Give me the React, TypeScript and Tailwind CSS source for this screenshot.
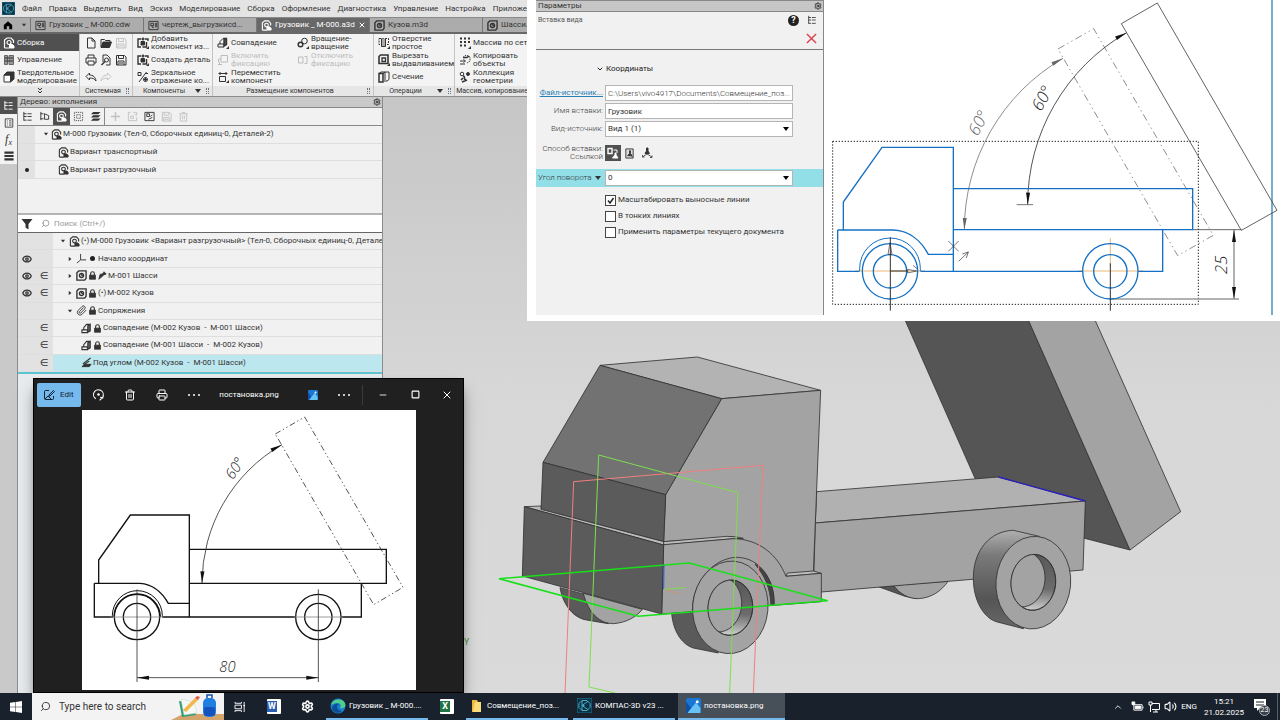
import React from "react";
import {
  Search,
  Settings,
  Trash2,
  Printer,
  Minus,
  Square,
  X,
  ChevronUp,
  ChevronDown,
  Eye,
  Paperclip,
  Volume2,
} from "lucide-react";

const glyphs: Record<string, React.ReactNode> = {
  home: <path d="M1 6 6 1.5 11 6v5H7.5V7.5h-3V11H1z" fill="currentColor" stroke="none" />,
  drawing: (
    <>
      <path d="M1 1.5h10v9H1z" />
      <path d="M3 3.5h3v2.5H3zM8 3.5h1.5v4H8zM4.5 6v2h2" />
    </>
  ),
  assembly: (
    <>
      <path d="M1.500 11V3L4 1h4l2.500 2.500V6M1.500 11h5" strokeWidth="1.200" />
      <circle cx="6" cy="5.500" r="2" strokeWidth="1.200" />
      <path d="M6.500 7.500h3L11 9v2H6.500z" fill="currentColor" />
    </>
  ),
  part: (
    <>
      <path d="M1 3 3 1h8v8l-1.500 2H1z" strokeWidth="1.500" />
      <circle cx="6" cy="6" r="2.200" strokeWidth="1.500" />
      <path d="M6 3.800v2.200h2" />
    </>
  ),
  manage: (
    <>
      <path d="M1.500 1.500h3v9h-3zM6 1.500h4.500v9H6z" fill="#999" stroke="#666" />
      <path d="M2 4h8M2 7h8" />
    </>
  ),
  solid: (
    <>
      <path d="M1 4h6.500v7H1z" fill="#fff" />
      <path d="M1 4l3-3h7L7.500 4zM7.500 4 11 1v7l-3.500 3z" fill="currentColor" />
    </>
  ),
  file: <path d="M2.500 1h4.500l3 3v7H2.500zM7 1v3h3" />,
  folder: (
    <>
      <path d="M1 10V2.500h3.500l1 1H10V5" />
      <path d="M1 10.500 3 5h8.500l-2 5.500z" fill="currentColor" />
    </>
  ),
  save: <path d="M1.500 1.500h8l1.500 1.500v8H1.500zM3.500 1.500v3h5v-3M3 11V7h6v4M4 9h4" />,
  print: <path d="M3 4V1h6v3M3 9H1V4h10v5H9M3 7h6v4H3z" />,
  preview: (
    <>
      <path d="M3 8V1h4l3 3v7H6" />
      <circle cx="6.500" cy="6" r="2" />
      <path d="M5 7.500 1.500 11" strokeWidth="1.500" />
    </>
  ),
  undo: <path d="M4.500 2 1 5.500 4.500 9V7c3 0 5 .5 6.500 3C10.500 6 8 4 4.500 4z" />,
  redo: <path d="M7.500 2 11 5.500 7.500 9V7c-3 0-5 .5-6.500 3C1.500 6 4 4 7.500 4z" />,
  component: (
    <>
      <path d="M4 2H1v8h3M8 2h3v2" strokeWidth="1.400" />
      <path d="M4 4.500h3.500V8H4z" fill="currentColor" />
      <path d="M6 .5v3M4.500 2h3M9.500 5v5H5.500" strokeWidth="1.400" />
      <path d="M12 9v3H9z" fill="currentColor" stroke="none" />
    </>
  ),
  mirror: (
    <>
      <path d="M1 1.500h3v3H1zM9.500 1 2 11M8 2.500h3" />
      <circle cx="8.500" cy="8.500" r="2" />
      <path d="M8.500 6.500v4M6.500 8.500h4" />
    </>
  ),
  mate: (
    <>
      <path d="M1 7.500h6v3H1zM3 7.500V5L6 1.500h3.500" strokeWidth="1.200" />
      <path d="M7.500 3 10 1.500v7L7.500 10z" fill="#777" strokeWidth="1.400" />
    </>
  ),
  mateTool: (
    <>
      <path d="M1 7h6v3H1zM3 7V4.500L6 1.500h3.500" />
      <path d="M7 1.500h2.500v6L7 9z" fill="#555" strokeWidth="1.400" />
      <path d="M12 9v3H9z" fill="currentColor" stroke="none" />
    </>
  ),
  fix: <path d="M4 1.500h6.500V8H4zM1 10.500h4M2.500 8v2.500M4 5H1.500v3" />,
  unfix: <path d="M1.500 3H6v6H1.500zM7.500 2.500H10v7H7.500" />,
  move: (
    <>
      <path d="M2 2.500h8M3.500 1 2 2.500 3.500 4M8.500 1 10 2.500 8.500 4M2.500 5.500h6v5h-6z" />
      <path d="M12 9v3H9z" fill="currentColor" stroke="none" />
    </>
  ),
  rotate: (
    <>
      <circle cx="7.500" cy="4" r="2.800" />
      <circle cx="3.500" cy="7.500" r="2.300" strokeWidth="1.500" />
      <path d="M12 9v3H9z" fill="currentColor" stroke="none" />
    </>
  ),
  hole: (
    <>
      <path d="M1 1.500h9.500v6H1z" strokeDasharray="2 1" />
      <path d="M3.500 1.500V9.500h4v-8" fill="#aaa" />
      <path d="M12 9v3H9z" fill="currentColor" stroke="none" />
    </>
  ),
  cut: (
    <>
      <path d="M1 2.500 2.500 1H10v8.500H1z" strokeWidth="1.600" />
      <path d="M4 4h3.500v3.500H4z" strokeWidth="1.300" />
      <path d="M12 9v3H9z" fill="currentColor" stroke="none" />
    </>
  ),
  section: (
    <>
      <path d="M1 2.500 3 1h8v7.500L9 10H6" />
      <path d="M1 2.500h4V11H1z" strokeWidth="1.500" />
      <path d="M5 2.500 7 1M7 1v8" />
    </>
  ),
  array: (
    <>
      <path d="M1 1.500h2M5 1.500h2M9 1.500h2M1 5h2M5 5h2M9 5h2M1 8.500h2M5 8.500h2" strokeWidth="2" />
      <path d="M12 9v3H9z" fill="currentColor" stroke="none" />
    </>
  ),
  copy: (
    <>
      <path d="M4 3.500 7 1l4 2v4L8 9" strokeDasharray="1.500 1" />
      <path d="M4 3.500h4l2-1.500" strokeWidth="1.400" />
      <path d="M1 7h4M4.500 5.500l2 1.500-2 1.500M1 10h5" />
    </>
  ),
  collection: (
    <>
      <circle cx="3" cy="3" r="1.800" />
      <circle cx="9" cy="3" r="1.500" fill="currentColor" />
      <path d="M4 5c3 0 0 4 3 4M2 9l2-2M3 11l5-2" strokeWidth="1.600" />
    </>
  ),
  tree: <path d="M2 1v9.500M2 3h3M2 6h3M2 10h3M6 3h4.500M6 6h4.500M6 10h4.500" />,
  treeAlt: <path d="M2 1v9M2 3h3M2 8.500h3M6 3l4.500 2v4H6z" />,
  dotted: <path d="M1.500 1.500h9v9h-9zM4 4h4v4H4z" strokeDasharray="1 1" />,
  layers: (
    <path
      d="M3.500 1H11.500L9 3.500H1zM3.500 4.700H11.500L9 7H1zM3.500 8.200H11.500L9 10.700H1z"
      fill="currentColor"
      stroke="none"
    />
  ),
  plus: <path d="M6 1v10M1 6h10" strokeWidth="1.500" />,
  refresh: <path d="M4 1.500H1.500v9h9V7M7 1.500h3.500V5M4 5.500h3V8H4zM8 3l2 2" />,
  grid: (
    <>
      <path d="M1 1.500h10v9H1z" />
      <path d="M3 3h3v3H3zM7 6l2-2M5 9l4-2" />
    </>
  ),
  trash: <path d="M1.500 3h9M4.500 3V1.500h3V3M2.500 3v8h7V3M5 5v4M7 5v4" />,
  funnel: <path d="M.5 1h11L7.500 6v5.500l-3-2V6z" fill="currentColor" stroke="none" />,
  lock: (
    <>
      <path d="M3.500 6V3.500a2.500 2.500 0 0 1 5 0V6" strokeWidth="1.500" />
      <path d="M2 5.500h8V11H2z" fill="currentColor" />
    </>
  ),
  pin: <path d="M11 4 8 1 7 3 4 4.500 3 4 1 11l5-4 1-1.500z" fill="currentColor" />,
  axes: <path d="M5 1v6.500h6M5 7.500 1 11" />,
  angle: (
    <>
      <path d="M1 10.500h8l2-2.500H4z" fill="currentColor" />
      <path d="M2 7.500 10.500 1M3 8.500 9 4.500" strokeWidth="1.300" />
    </>
  ),
  listBox: (
    <>
      <path d="M1.500 1h9v10h-9z" />
      <path d="M3.500 3.500h1M6 3.500h3M3.500 6h1M6 6h3M3.500 8.500h1M6 8.500h3" />
    </>
  ),
  bars: <path d="M.5 2h11M.5 6h11M.5 10h11" strokeWidth="2.600" />,
  link: (
    <>
      <path d="M1 1.500h4v5H1z" strokeWidth="1.400" />
      <path d="M6.500 3H10v3" />
      <path d="M8 6v2L5.500 11h5.500L9 8V6z" fill="currentColor" />
    </>
  ),
  picture: (
    <>
      <path d="M2 1h8v10H2z" fill="#ddd" />
      <path d="M6 3v3L4 8.500h4.500L7 6V3zM8 7l1 3" fill="currentColor" />
    </>
  ),
  place: (
    <>
      <path d="M5.500 1v3L4 6.500h4.500L7 4V1z" fill="currentColor" />
      <path d="M6 7 1.500 10M6 7l5 3M1.500 8v2h2M9 10.500h2V8.500" strokeWidth=".8" />
    </>
  ),
  turn: (
    <>
      <path d="M3.500 10A4.500 4.500 0 1 1 10 8M7.500 8.500l2.500.5.500-2.500M7 11.500l2.500-2.500" />
      <circle cx="6" cy="6" r="1.200" fill="currentColor" stroke="none" />
    </>
  ),
  logo: (
    <>
      <path d="M0 0h12v12H0z" fill="#083142" stroke="#1c6a87" />
      <path
        d="M4 2h4l2.500 2.500v3L8 10H4L1.500 7.500v-3zM4 2v8M4 6l5-3.500M4 6l5 3.500M4 6h2"
        stroke="#4fa8c8"
        strokeWidth=".8"
      />
    </>
  ),
};

function Glyph({ name, className = "size-3" }: { name: string; className?: string }) {
  return (
    <svg viewBox="0 0 12 12" className={`shrink-0 ${className}`} fill="none" stroke="currentColor" aria-hidden="true">
      {glyphs[name]}
    </svg>
  );
}

function Caret({ className = "" }: { className?: string }) {
  return (
    <svg viewBox="0 0 6 4" className={`w-[6px] h-[4px] shrink-0 ${className}`} aria-hidden="true">
      <path d="M0 0h6L3 4z" fill="currentColor" />
    </svg>
  );
}

function Grip() {
  return <span className="w-[3px] h-[6px] border-x border-dotted border-gray-500" />;
}

/* ---------- menu, tabs, ribbon ---------- */

const menu = [
  "Файл",
  "Правка",
  "Выделить",
  "Вид",
  "Эскиз",
  "Моделирование",
  "Сборка",
  "Оформление",
  "Диагностика",
  "Управление",
  "Настройка",
  "Приложения",
];

const tabs = [
  { icon: "drawing", label: "Грузовик _ М-000.cdw" },
  { icon: "drawing", label: "чертеж_выгрузкиcd..." },
  { icon: "assembly", label: "Грузовик _ М-000.a3d", active: true },
  { icon: "part", label: "Кузов.m3d" },
  { icon: "part", label: "Шасси.m3d" },
];

function MenuBar() {
  return (
    <nav className="flex items-center h-[17px] bg-[#e4e4e4] gap-[7px] pl-[2px] overflow-hidden">
      <Glyph name="logo" className="size-[13px]" />
      {menu.map((item) => (
        <button key={item} className="shrink-0">
          {item}
        </button>
      ))}
    </nav>
  );
}

function TabBar() {
  return (
    <div className="flex h-[17px] bg-[#acacac] border-b-2 border-[#686868] border-t border-t-[#8a8a8a]">
      <button
        className="w-[31px] shrink-0 flex items-center justify-center gap-2 border-r border-[#777]"
        aria-label="Главная"
      >
        <Glyph name="home" className="size-[10px] text-black" />
        <Caret className="scale-75" />
      </button>
      {tabs.map((tab) => (
        <button
          key={tab.label}
          className={`w-[113px] shrink-0 flex items-center gap-[3px] pl-1 border-r border-[#777] whitespace-nowrap ${
            tab.active ? "bg-[#686868] text-white" : ""
          }`}
        >
          <Glyph name={tab.icon} className="size-[11px]" />
          <span>{tab.label}</span>
          {tab.active && <X className="size-2 ml-auto mr-1 shrink-0" strokeWidth={3} />}
        </button>
      ))}
    </div>
  );
}

function Tool({
  icon,
  lines,
  off,
  className = "",
}: {
  icon: string;
  lines: string[];
  off?: boolean;
  className?: string;
}) {
  return (
    <button className={`flex items-center gap-[2px] h-[17px] text-left ${off ? "text-[#bcbcbc]" : ""} ${className}`}>
      <Glyph name={icon} />
      <span className="leading-[8px] whitespace-nowrap">
        {lines.map((line) => (
          <span key={line} className="block">
            {line}
          </span>
        ))}
      </span>
    </button>
  );
}

function Group({
  title,
  more,
  className,
  children,
}: {
  title: string;
  more?: boolean;
  className: string;
  children: React.ReactNode;
}) {
  return (
    <section className={`flex flex-col border-r border-[#c4c4c4] ${className}`}>
      <div className="h-[52px] px-1">{children}</div>
      <div className="flex items-center h-[10px] bg-[#e6e6e6] text-[7px] pr-[3px]">
        <h2 className="flex-1 text-center whitespace-nowrap">{title}</h2>
        {more && <Caret className="mr-[5px]" />}
        <Grip />
      </div>
    </section>
  );
}

function Ribbon() {
  return (
    <div className="flex h-[63px] bg-[#f3f3f3] border-b border-[#8c8c8c]">
      <div className="w-[80px] shrink-0 flex flex-col border-r border-[#c4c4c4]">
        <Tool icon="assembly" lines={["Сборка"]} className="bg-[#505050] text-white pl-[3px]" />
        <Tool icon="manage" lines={["Управление"]} className="pl-[3px]" />
        <Tool icon="solid" lines={["Твердотельное", "моделирование"]} className="pl-[3px]" />
        <button className="mt-auto h-[10px] bg-[#e6e6e6] flex justify-center items-center" aria-label="Ещё">
          <svg viewBox="0 0 6 6" className="size-[6px]" fill="none" stroke="currentColor">
            <path d="M1 0l2 2 2-2M1 3l2 2 2-2" />
          </svg>
        </button>
      </div>
      <Group title="Системная" className="w-[53px] shrink-0">
        <div className="grid grid-cols-3 grid-rows-3 h-full place-items-center">
          <Glyph name="file" />
          <Glyph name="folder" />
          <Glyph name="save" className="size-3 text-[#c4c4c4]" />
          <Glyph name="print" />
          <Glyph name="preview" />
          <Glyph name="save" />
          <Glyph name="undo" />
          <Glyph name="redo" className="size-3 text-[#c4c4c4]" />
        </div>
      </Group>
      <Group title="Компоненты" more className="w-[80px] shrink-0">
        <Tool icon="component" lines={["Добавить", "компонент из..."]} />
        <Tool icon="component" lines={["Создать деталь"]} />
        <Tool icon="mirror" lines={["Зеркальное", "отражение ко..."]} />
      </Group>
      <Group title="Размещение компонентов" className="w-[161px] shrink-0">
        <div className="grid grid-cols-[80px_1fr] grid-rows-3">
          <Tool icon="mateTool" lines={["Совпадение"]} />
          <Tool icon="rotate" lines={["Вращение-", "вращение"]} />
          <Tool icon="fix" lines={["Включить", "фиксацию"]} off />
          <Tool icon="unfix" lines={["Отключить", "фиксацию"]} off />
          <Tool icon="move" lines={["Переместить", "компонент"]} />
        </div>
      </Group>
      <Group title="Операции" more className="w-[81px] shrink-0">
        <Tool icon="hole" lines={["Отверстие", "простое"]} />
        <Tool icon="cut" lines={["Вырезать", "выдавливанием"]} />
        <Tool icon="section" lines={["Сечение"]} />
      </Group>
      <Group title="Массив, копирование" className="w-[81px] shrink-0">
        <Tool icon="array" lines={["Массив по сетке"]} />
        <Tool icon="copy" lines={["Копировать", "объекты"]} />
        <Tool icon="collection" lines={["Коллекция", "геометрии"]} />
      </Group>
    </div>
  );
}

/* ---------- model tree ---------- */

function SideStrip() {
  return (
    <aside className="w-[17px] shrink-0 bg-[#c9c9c9]">
      <div className="flex flex-col bg-[#f3f3f3]">
        <button className="h-[17px] flex items-center justify-center bg-[#505050] text-white" aria-label="Дерево">
          <Glyph name="tree" className="size-[11px]" />
        </button>
        <button className="h-[17px] flex items-center justify-center" aria-label="Параметры">
          <Glyph name="listBox" className="size-[10px]" />
        </button>
        <button className="h-[17px] font-['Liberation_Serif',serif] italic text-[12px] leading-[17px]">
          f<sub className="text-[8px]">x</sub>
        </button>
        <button className="h-[16px] flex items-center justify-center" aria-label="Слои">
          <Glyph name="bars" className="size-[10px]" />
        </button>
      </div>
    </aside>
  );
}

function TreeToolbar() {
  return (
    <div className="flex items-center h-[18px] pl-[1px] border-b border-[#888]">
      {["tree", "treeAlt", "assembly", "dotted", "layers"].map((name) => (
        <button
          key={name}
          aria-label={name}
          className={`w-[17px] h-[17px] flex items-center justify-center ${
            name === "assembly" ? "bg-[#505050] text-white" : ""
          }`}
        >
          <Glyph name={name} className="size-[11px]" />
        </button>
      ))}
      <span className="w-px h-[17px] bg-[#888] mr-[2px]" />
      {["plus", "refresh", "grid", "save", "trash"].map((name) => (
        <button
          key={name}
          aria-label={name}
          className={`w-[17px] h-[17px] flex items-center justify-center ${name === "grid" ? "" : "text-[#c2c2c2]"}`}
        >
          <Glyph name={name} className="size-[11px]" />
        </button>
      ))}
    </div>
  );
}

type Row = {
  pad: string;
  open?: boolean;
  closed?: boolean;
  eye?: boolean;
  member?: boolean;
  marks: React.ReactNode;
  label: string;
  on?: boolean;
};

const small = "size-[9px]";
const assemblyIcon = <Glyph name="assembly" className="size-[11px]" />;

const rows: Row[] = [
  {
    pad: "pl-[7px]",
    open: true,
    marks: (
      <>
        {assemblyIcon}
        <span>(•)</span>
      </>
    ),
    label: "М-000 Грузовик <Вариант разгрузочный> (Тел-0, Сборочных единиц-0, Детале",
  },
  {
    pad: "pl-[14px]",
    closed: true,
    eye: true,
    marks: (
      <>
        <Glyph name="axes" className="size-[11px]" />
        <span className="size-[5px] rounded-full bg-[#222] mx-[2px]" />
      </>
    ),
    label: "Начало координат",
  },
  {
    pad: "pl-[14px]",
    closed: true,
    eye: true,
    member: true,
    marks: (
      <>
        <Glyph name="part" className="size-[11px]" />
        <Glyph name="lock" className={small} />
        <Glyph name="pin" className={small} />
      </>
    ),
    label: "М-001 Шасси",
  },
  {
    pad: "pl-[14px]",
    closed: true,
    eye: true,
    member: true,
    marks: (
      <>
        <Glyph name="part" className="size-[11px]" />
        <Glyph name="lock" className={small} />
        <span>(•)</span>
      </>
    ),
    label: "М-002 Кузов",
  },
  {
    pad: "pl-[14px]",
    open: true,
    marks: (
      <>
        <Paperclip className="size-[11px]" strokeWidth={2} />
        <Glyph name="lock" className={small} />
      </>
    ),
    label: "Сопряжения",
  },
  {
    pad: "pl-[28px]",
    member: true,
    marks: (
      <>
        <Glyph name="mate" className="size-[11px]" />
        <Glyph name="lock" className={small} />
      </>
    ),
    label: "Совпадение (М-002 Кузов  -  М-001 Шасси)",
  },
  {
    pad: "pl-[28px]",
    member: true,
    marks: (
      <>
        <Glyph name="mate" className="size-[11px]" />
        <Glyph name="lock" className={small} />
      </>
    ),
    label: "Совпадение (М-001 Шасси  -  М-002 Кузов)",
  },
  {
    pad: "pl-[28px]",
    member: true,
    on: true,
    marks: <Glyph name="angle" className="size-[11px]" />,
    label: "Под углом (М-002 Кузов  -  М-001 Шасси)",
  },
];

function Variant({ label, top, current }: { label: string; top?: boolean; current?: boolean }) {
  return (
    <li className="flex items-center flex-1 border-b border-[#dedede]">
      <span className="w-[17px] self-stretch bg-[#e2e2e2] flex items-center justify-center">
        {current && <span className="size-1 rounded-full bg-[#222]" />}
      </span>
      <span className={`flex items-center gap-[1px] ${top ? "pl-[8px]" : "pl-[23px]"}`}>
        {top && <Caret className="scale-75 mr-[1px]" />}
        {assemblyIcon}
        {label}
      </span>
    </li>
  );
}

function TreePanel() {
  return (
    <aside className="w-[366px] shrink-0 flex flex-col bg-[#f1f1f1] border-x border-[#8c8c8c]">
      <header className="flex items-center justify-between h-[11px] bg-[#c9c9c9] border-b border-[#888] pl-[2px] pr-[1px]">
        <h2>Дерево: исполнения</h2>
        <Settings className="size-2" strokeWidth={3} />
      </header>
      <TreeToolbar />
      <ul className="flex flex-col h-[53px]">
        <Variant label="М-000 Грузовик (Тел-0, Сборочных единиц-0, Деталей-2)" top />
        <Variant label="Вариант транспортный" />
        <Variant label="Вариант разгрузочный" current />
      </ul>
      <div className="h-[36px] border-b-2 border-[#b4b4b4]" />
      <label className="flex items-center h-[18px] bg-white border-b border-[#666] pl-[3px] gap-2">
        <Glyph name="funnel" />
        <Search className="size-[9px] text-[#888] -scale-x-100 -mr-1" />
        <input className="flex-1 outline-none placeholder:text-[#999]" placeholder="Поиск (Ctrl+/)" aria-label="Поиск" />
      </label>
      <ul className="grid grid-rows-8 h-[141px] border-b-2 border-[#5cc3d3]">
        {rows.map((row) => (
          <li key={row.label} className="flex items-stretch border-b border-[#dedede] whitespace-pre overflow-hidden">
            <span className="w-[17px] shrink-0 bg-[#e2e2e2] flex items-center justify-center">
              {row.eye && <Eye className="size-[10px]" strokeWidth={3} />}
            </span>
            <span className="w-[18px] shrink-0 bg-[#e2e2e2] flex items-center justify-center font-['DejaVu_Sans',sans-serif] text-[10px]">
              {row.member && "∈"}
            </span>
            <span className={`flex-1 flex items-center gap-px ${row.pad} ${row.on ? "bg-[#bde7ee]" : ""}`}>
              {row.open && <Caret className="scale-75 mr-[2px]" />}
              {row.closed && <Caret className="scale-75 -rotate-90 mr-[2px]" />}
              {row.marks}
              <span>{row.label}</span>
            </span>
          </li>
        ))}
      </ul>
      <div className="flex-1 bg-[#e7ebee]" />
    </aside>
  );
}

/* ---------- 3D model ---------- */

function Viewport() {
  return (
    <svg
      viewBox="-231 -669 2691 1788"
      preserveAspectRatio="xMinYMin slice"
      className="flex-1 min-w-0 h-full"
      role="img"
      aria-label="Модель грузовика"
    >
      <defs>
        <linearGradient id="bg" x1="0" y1="0" x2="0" y2="1">
          <stop offset="0" stopColor="#c6c6c6" />
          <stop offset=".5" stopColor="#d7d7d7" />
          <stop offset="1" stopColor="#dadada" />
        </linearGradient>
        <linearGradient id="tread" x1="0" y1="0" x2="0" y2="1">
          <stop offset="0" stopColor="#b0b0b0" />
          <stop offset=".25" stopColor="#7a7a7a" />
          <stop offset=".7" stopColor="#555" />
          <stop offset="1" stopColor="#686868" />
        </linearGradient>
        <linearGradient id="bore" x1="0" y1="0" x2="0" y2="1">
          <stop offset="0" stopColor="#585858" />
          <stop offset=".6" stopColor="#6c6c6c" />
          <stop offset="1" stopColor="#d0d0d0" />
        </linearGradient>
        <clipPath id="rearBore">
          <ellipse cx="1720" cy="787" rx="67" ry="84" transform="rotate(5 1720 787)" />
        </clipPath>
        <clipPath id="frontBore">
          <ellipse cx="811" cy="863" rx="67" ry="83" transform="rotate(5 811 863)" />
        </clipPath>
      </defs>
      <rect x="-231" y="-669" width="2691" height="1788" fill="url(#bg)" />
      <g stroke="#333" strokeWidth="2.500" strokeLinejoin="round">
        {/* raised body */}
        <path d="M1335 0 1705 0 2010 690 1870 654 1545 475z" fill="#555" />
        <path d="M1705 0H1905L2162 575 2010 690z" fill="#a3a3a3" />
        {/* far rear wheel */}
        <path d="M1255 800 1335 829 1370 836 1300 798z" fill="#555" />
        <path d="M1300 796C1320 822 1345 836 1375 836 1415 834 1445 812 1464 784z" fill="#a3a3a3" />
        {/* frame */}
        <path d="M1070 515 1615 471 1876 543 1066 609z" fill="#b1b1b1" />
        <path d="M1066 609 1876 543 1869 750 1060 818z" fill="#a3a3a3" />
        <path d="M1615 471 1876 543" stroke="#2a20c0" strokeWidth="4" />
        {/* rear wheel */}
        <path d="M1738 649 1660 631C1590 633 1540 690 1540 775 1540 840 1570 895 1612 906L1690 926z" fill="url(#tread)" />
        <ellipse cx="1720" cy="788" rx="112" ry="139" transform="rotate(5 1720 788)" fill="#a3a3a3" />
        <ellipse cx="1720" cy="787" rx="67" ry="84" transform="rotate(5 1720 787)" fill="url(#bore)" />
        <g clipPath="url(#rearBore)">
          <ellipse cx="1688" cy="777" rx="67" ry="84" transform="rotate(5 1688 777)" fill="#a3a3a3" />
        </g>
        <ellipse cx="1720" cy="787" rx="67" ry="84" transform="rotate(5 1720 787)" fill="none" />
        {/* far front wheel */}
        <path d="M300 803C310 860 345 895 380 900L445 911 400 830z" fill="#5a5a5a" />
        <path d="M370 820C385 880 420 911 460 911 500 908 530 890 547 868z" fill="#a3a3a3" />
        {/* near front tread */}
        <path d="M635 880C640 940 670 975 700 984L775 999 720 870z" fill="#5a5a5a" />
        {/* cab */}
        <path d="M420 136 712 111 1082 211 785 236z" fill="#b3b3b3" />
        <path d="M617 524 785 236 1082 211 1060 756 980 769 820 650 611 665z" fill="#a3a3a3" />
        <path d="M420 136 785 236 617 524 249 427z" fill="#727272" />
        <path d="M249 427 617 524 611 665 243 568z" fill="#5b5b5b" />
        <path d="M193 560 243 558V568L611 665V675z" fill="#bbb" />
        <path d="M611 665 800 649Q830 649 850 655L820 656 611 675z" fill="#bbb" />
        <path d="M978 769 982 759 1060 753 1084 760z" fill="#bbb" />
        <path d="M611 674 820 656C900 658 952 705 978 769L1084 760V845L605 882z" fill="#a3a3a3" />
        <path d="M193 560 611 675 605 882 187 768z" fill="#5b5b5b" />
        {/* wheel arch */}
        <path d="M697 872C698 780 765 712 832 712 905 714 944 785 942 854L922 857z" fill="#a3a3a3" />
        <path d="M885 732C925 755 945 805 942 854L933 855C930 800 915 770 885 732z" fill="#444" />
        <ellipse cx="811" cy="862" rx="113" ry="139" transform="rotate(5 811 862)" fill="#a3a3a3" />
        <ellipse cx="811" cy="863" rx="67" ry="83" transform="rotate(5 811 863)" fill="url(#bore)" />
        <g clipPath="url(#frontBore)">
          <ellipse cx="778" cy="853" rx="67" ry="83" transform="rotate(5 778 853)" fill="#a3a3a3" />
        </g>
        <ellipse cx="811" cy="863" rx="67" ry="83" transform="rotate(5 811 863)" fill="none" />
      </g>
      {/* datum planes */}
      <g fill="none">
        <path d="M315 1119 341 485 909 436 880 1119" stroke="#f07f7f" strokeWidth="3" />
        <path d="M465 1119 387 1101 416 405 834 518 809 1119" stroke="#7be04e" strokeWidth="3" />
        <path d="M117 776 688 729 1103 842 535 889z" stroke="#18e018" strokeWidth="4.500" />
        <path d="M611 808 612 735" stroke="#2464d8" strokeWidth="3" />
        <path d="M611 808 676 803" stroke="#7be04e" strokeWidth="3" />
        <path d="M615 808 660 822" stroke="#e08a5a" strokeWidth="2" />
      </g>
      <text x="12" y="974" fontSize="26" fill="#3f9a48">
        Y
      </text>
    </svg>
  );
}

/* ---------- drafting ---------- */

function Arrow({ x, y, angle, fill = "#111" }: { x: number; y: number; angle: number; fill?: string }) {
  return <path d="M0 0 36 6 36 -6z" fill={fill} transform={`translate(${x} ${y}) rotate(${angle})`} />;
}

function InsertDrawing() {
  return (
    <svg
      viewBox="-3 0 1368 945"
      preserveAspectRatio="xMinYMin meet"
      className="w-[456px] h-[315px] shrink-0"
      fill="none"
      role="img"
      aria-label="Чертёж грузовика"
    >
      <path d="M1341 0V945" stroke="#5b9cc4" strokeWidth="5" />
      <path d="M23 424H1120V913H23z" stroke="#222" strokeWidth="3" strokeDasharray="4 5" />
      <g stroke="#444" strokeWidth="2.500">
        <path d="M889 71 997 9 1356 631 1249 691z" />
        <path d="M699 147 806 86 1165 706 1058 767z" stroke="#777" strokeDasharray="22 10 4 10 4 10" />
        <path d="M418 690A595 595 0 0 1 714 175" stroke="#777" />
        <path d="M608 614A595 595 0 0 1 905 98" stroke="#333" />
        <path d="M575 614H624" stroke="#777" strokeWidth="3" />
        <path d="M1103 689H1249M1227 690V896" />
        <path d="M856 897H1242" stroke="#999" strokeWidth="4" />
      </g>
      <Arrow x={418} y={690} angle={-88} fill="#666" />
      <Arrow x={714} y={175} angle={152} fill="#666" />
      <Arrow x={608} y={614} angle={-88} />
      <Arrow x={905} y={98} angle={152} />
      <Arrow x={1227} y={690} angle={90} />
      <Arrow x={1227} y={897} angle={-90} />
      <g stroke="#e9b777" strokeWidth="3">
        <path d="M90 813H300M760 813H955M856 715V800" />
      </g>
      <g stroke="#1470c4" strokeWidth="4">
        <path d="M55 690V606L171 442H385V814" />
        <path d="M38 690H205C255 692 290 725 310 763H385" />
        <path d="M38 690V814H103M287 814H385M385 566H1103V689H385M1013 690V814H940M385 814H772" />
        <path d="M104 814V805A91 91 0 0 1 286 805V814" strokeWidth="3" />
        <circle cx="195" cy="814" r="83" />
        <circle cx="195" cy="814" r="50" />
        <circle cx="856" cy="814" r="83" />
        <circle cx="856" cy="814" r="50" />
      </g>
      <g stroke="#333" strokeWidth="3">
        <path d="M196 712V932M856 790V932M196 813H250" />
        <path d="M189 763 195 728 201 763zM247 808 275 813 247 819z" strokeWidth="2" />
        <path d="M370 723 401 754M401 723 370 754M401 784 430 756M412 762 430 756 424 774M264 796 276 806" strokeWidth="2" />
      </g>
      <g className="font-['Open_Sans',sans-serif] italic font-light" fontSize="50">
        <text transform="translate(458 410) rotate(-62)" fill="#666">
          60°
        </text>
        <text transform="translate(649 336) rotate(-62)" fill="#222">
          60°
        </text>
        <text transform="translate(1205 822) rotate(-90)" fill="#222">
          25
        </text>
      </g>
    </svg>
  );
}

function PhotoDrawing() {
  return (
    <svg viewBox="156 105 1002 840" className="w-[334px] h-[280px] bg-white" fill="none" role="img" aria-label="постановка.png">
      <g stroke="#111" strokeWidth="4">
        <path d="M206 625V555L301 420H478V726" />
        <path d="M193 625H330C372 628 398 655 415 685H478" />
        <path d="M193 625V726H249M397 726H796M934 726H994V625M478 523H1069V625H478" />
        <path d="M247 726V722A75 75 0 0 1 397 722V726" strokeWidth="3" />
        <path d="M252 726A69 69 0 0 1 391 726" />
        <circle cx="321" cy="726" r="68" />
        <circle cx="321" cy="726" r="41" />
        <circle cx="865" cy="726" r="68" />
        <circle cx="865" cy="726" r="41" />
      </g>
      <g stroke="#333" strokeWidth="2.500">
        <path d="M240 726H400M790 726H940" stroke="#888" />
        <path d="M321 643V921M865 643V921M321 908H865" />
        <path d="M736 177 824 126 1119 637 1031 689z" strokeDasharray="18 8 4 8 4 8" />
        <path d="M516 625A480 480 0 0 1 756 209" />
      </g>
      <Arrow x={516} y={625} angle={-88} />
      <Arrow x={756} y={209} angle={152} />
      <Arrow x={321} y={908} angle={0} />
      <Arrow x={865} y={908} angle={180} />
      <g className="font-['Open_Sans',sans-serif] italic font-light" fontSize="44" fill="#222">
        <text transform="translate(609 316) rotate(-57)">60°</text>
        <text x="568" y="890">
          80
        </text>
      </g>
    </svg>
  );
}

/* ---------- parameters ---------- */

const field = "w-full h-4 border border-[#b5b5b5] bg-white pl-[2px] outline-none appearance-none text-[#333]";
const formRow = "grid grid-cols-[67px_188px] gap-x-[2px] items-center";

function Picker({ id, value }: { id: string; value: string }) {
  return (
    <span className="relative">
      <select id={id} className={`${field} block`}>
        <option>{value}</option>
      </select>
      <Caret className="absolute right-1 top-[6px] text-black pointer-events-none" />
    </span>
  );
}

function Check({ label, checked }: { label: string; checked?: boolean }) {
  return (
    <label className="flex items-center gap-[2px] h-4">
      <span className="relative size-[11px]">
        <input
          type="checkbox"
          defaultChecked={checked}
          className="peer block size-[11px] appearance-none border border-[#444] bg-white"
        />
        <svg
          viewBox="0 0 11 11"
          className="absolute inset-0 hidden peer-checked:block pointer-events-none"
          fill="none"
          stroke="#222"
          strokeWidth="1.500"
        >
          <path d="M3 5.500 5 8 8.500 3" />
        </svg>
      </span>
      {label}
    </label>
  );
}

function Parameters() {
  return (
    <form className="w-[288px] shrink-0 bg-[#f1f1f1] border-r border-[#888]">
      <header className="flex items-center justify-between h-3 bg-[#c6c6c6] border-y border-[#888] pl-[2px] pr-[1px]">
        <h2>Параметры</h2>
        <Settings className="size-2" strokeWidth={3} />
      </header>
      <div className="h-[38px] border-b border-[#777] pl-[2px] pr-[6px]">
        <div className="flex items-center h-4 gap-2">
          <h3 className="text-[7px] flex-1 text-[#555]">Вставка вида</h3>
          <button
            type="button"
            className="size-[11px] rounded-full bg-[#222] text-white font-bold text-[9px] leading-[11px]"
          >
            ?
          </button>
          <Glyph name="tree" className="size-[10px]" />
        </div>
        <button type="button" className="block ml-auto mt-[5px] text-[#dc4550]" aria-label="Закрыть">
          <svg viewBox="0 0 12 12" className="size-[11px]" stroke="currentColor" strokeWidth="1.600">
            <path d="M1 1l10 10M11 1 1 11" />
          </svg>
        </button>
      </div>
      <h3 className="flex items-center gap-[2px] pl-[60px] pt-[11px] pb-2 leading-4 text-[#222]">
        <ChevronDown className="size-2" strokeWidth={3} />
        Координаты
      </h3>
      <div className="flex flex-col gap-[2px] text-[#444]">
        <div className={formRow}>
          <a href="#source" className="text-[#2880b5] underline text-right whitespace-nowrap">
            Файл-источник...
          </a>
          <input
            aria-label="Файл-источник"
            className={`${field} font-light`}
            defaultValue="C:\Users\vivo4917\Documents\Совмещение_поз..."
          />
        </div>
        <div className={formRow}>
          <label htmlFor="name" className="text-right font-light">
            Имя вставки:
          </label>
          <input id="name" className={field} defaultValue="Грузовик" />
        </div>
        <div className={formRow}>
          <label htmlFor="view" className="text-right font-light whitespace-nowrap">
            Вид-источник:
          </label>
          <Picker id="view" value="Вид 1 (1)" />
        </div>
      </div>
      <div className={`${formRow} mt-2`}>
        <span className="text-right font-light leading-[8px] whitespace-nowrap">
          Способ вставки:
          <br />
          Ссылкой
        </span>
        <div className="flex items-center gap-[6px]">
          <button
            type="button"
            aria-label="Ссылкой"
            className="size-4 flex items-center justify-center bg-[#505050] text-white"
          >
            <Glyph name="link" />
          </button>
          <Glyph name="picture" className="size-[11px] -ml-[3px]" />
          <Glyph name="place" />
        </div>
      </div>
      <div className="bg-[#93dfe8] h-[18px] mt-2 flex items-center">
        <div className={formRow}>
          <label htmlFor="angle" className="flex items-center gap-[3px] pl-[2px] font-light whitespace-nowrap">
            Угол поворота <Caret />
          </label>
          <Picker id="angle" value="0" />
        </div>
      </div>
      <div className="pl-[69px] pt-[5px]">
        <Check label="Масштабировать выносные линии" checked />
        <Check label="В тонких линиях" />
        <Check label="Применить параметры текущего документа" />
      </div>
    </form>
  );
}

/* ---------- floating windows ---------- */

function InsertWindow() {
  return (
    <div className="absolute top-0 right-0 w-[753px] bg-white pl-[9px] pb-[6px] flex">
      <Parameters />
      <InsertDrawing />
    </div>
  );
}

function PhotoLogo({ className }: { className: string }) {
  return (
    <svg viewBox="0 0 12 12" className={className} aria-hidden="true">
      <rect width="12" height="12" rx="1.500" fill="#1976d2" />
      <path d="M1 12 8 3.500 11.500 8V12z" fill="#67c2f5" />
      <path d="M0 3 4 8 1 12H0z" fill="#0f4fa8" />
      <circle cx="9" cy="3" r="1.200" fill="#fff" />
    </svg>
  );
}

function Dots() {
  return (
    <svg viewBox="0 0 14 4" className="w-[14px] h-1" fill="currentColor">
      <circle cx="2" cy="2" r="1" />
      <circle cx="7" cy="2" r="1" />
      <circle cx="12" cy="2" r="1" />
    </svg>
  );
}

function PhotoWindow() {
  const button = "h-full flex items-center justify-center";
  return (
    <div className="absolute left-[33px] bottom-[27px] w-[431px] bg-[#202020] border border-black text-white shadow-lg shadow-black/50">
      <header className="flex items-center h-[31px]">
        <button className="flex items-center gap-[5px] w-11 h-6 ml-[3px] mr-px pl-[6px] rounded-[2px] bg-[#76b9ed] text-[#123]">
          <svg viewBox="0 0 12 12" className="size-3" fill="none" stroke="currentColor">
            <path d="M6 1.500H2.500a1 1 0 0 0-1 1v7a1 1 0 0 0 1 1h7a1 1 0 0 0 1-1V7M2 10l3-3 3 3M6 6l4.500-4.500 1 1L7 7H6z" />
          </svg>
          Edit
        </button>
        <button className={`${button} w-8`} aria-label="Повернуть">
          <Glyph name="turn" className="size-[13px]" />
        </button>
        <button className={`${button} w-8`} aria-label="Удалить">
          <Trash2 className="size-3" />
        </button>
        <button className={`${button} w-8`} aria-label="Печать">
          <Printer className="size-3" />
        </button>
        <button className={`${button} w-8`} aria-label="Ещё">
          <Dots />
        </button>
        <h2 className="flex-1 text-center">постановка.png</h2>
        <PhotoLogo className="size-[10px] ml-5 mr-2" />
        <button className={`${button} w-9`} aria-label="Меню">
          <Dots />
        </button>
        <span className="w-px h-5 bg-[#3a3a3a] mr-1" />
        <button className={`${button} w-8`} aria-label="Свернуть">
          <Minus className="size-[10px]" />
        </button>
        <button className={`${button} w-8`} aria-label="Развернуть">
          <Square className="size-[9px]" strokeWidth={3} />
        </button>
        <button className={`${button} w-8`} aria-label="Закрыть">
          <X className="size-3" />
        </button>
      </header>
      <div className="flex pl-12 pb-[2px]">
        <PhotoDrawing />
      </div>
    </div>
  );
}

/* ---------- taskbar ---------- */

function Task({
  icon,
  label,
  active,
  className,
}: {
  icon: React.ReactNode;
  label: string;
  active?: boolean;
  className: string;
}) {
  return (
    <button
      className={`flex items-center gap-[3px] h-full pl-1 border-b-2 border-[#76b9ed] whitespace-nowrap ${
        active ? "bg-[#474f58]" : ""
      } ${className}`}
    >
      {icon}
      <span>{label}</span>
    </button>
  );
}

function Office({ letter, className }: { letter: string; className: string }) {
  return (
    <span className={`flex items-center w-[14px] h-[15px] rounded-[1px] bg-white ${className}`}>
      <span className="w-[10px] h-[11px] bg-current flex items-center justify-center">
        <span className="text-white text-[9px] leading-none font-bold">{letter}</span>
      </span>
    </span>
  );
}

function Taskbar() {
  return (
    <footer className="relative flex items-center h-[27px] shrink-0 bg-[#19222c] text-white">
      <button className="w-8 h-full flex items-center justify-center" aria-label="Пуск">
        <svg viewBox="0 0 12 12" className="size-3" fill="#fff">
          <path d="M0 1.700 5.500 1v4.700H0zM6 .9 12 0v5.700H6zM0 6.300h5.500V11L0 10.300zM6 6.300h6V12l-6-.9z" />
        </svg>
      </button>
      <label className="flex items-center w-48 h-full bg-[#f3f3f3] text-[#333] pl-2 gap-2">
        <Search className="size-[11px] -scale-x-100" />
        <input
          className="w-0 flex-1 text-[10px] outline-none placeholder:text-[#333]"
          placeholder="Type here to search"
          aria-label="Type here to search"
        />
        <svg viewBox="0 0 53 27" className="w-[53px] h-[27px]" aria-hidden="true">
          <path d="M0 27 12 21H53V27z" fill="#d3a46c" />
          <path d="M8 8 22 10 25 22 11 24z" fill="#2f9e77" />
          <path d="M10 6 23 9 26 20 13 22z" fill="#f7f7f3" stroke="#c9d8cf" strokeWidth=".5" />
          <path d="M12 17 24 5 27 7 15 19z" fill="#f2b84b" />
          <path d="M24 5 27 7 29 4 26 3z" fill="#e05a4c" />
          <rect x="32" y="5" width="13" height="19" rx="5" fill="#1e7fe0" />
          <path d="M36 5V2h5v3" stroke="#1253a8" strokeWidth="1.500" fill="none" />
          <rect x="33" y="14" width="11" height="9" rx="2" fill="#1253c0" />
        </svg>
      </label>
      <button className="w-8 flex justify-center" aria-label="Представление задач">
        <svg viewBox="0 0 14 12" className="w-[13px] h-[11px]" fill="none" stroke="#fff">
          <path d="M1 1v1.500h7V1M1 4.500h7v4H1zM1 12v-1.500h7V12M11 1v11M10 5h2" />
        </svg>
      </button>
      <button className="w-9 flex justify-center" aria-label="Word">
        <Office letter="W" className="text-[#2b5fb4]" />
      </button>
      <button className="w-[30px] flex justify-center" aria-label="Параметры">
        <Settings className="size-[13px]" strokeWidth={3} />
      </button>
      <Task
        className="w-[102px] ml-1"
        label="Грузовик _ М-000...."
        icon={
          <svg viewBox="0 0 16 16" className="size-4">
            <circle cx="8" cy="8" r="7.500" fill="#1b7fd0" />
            <path d="M1 7C2 1 12-1 15 5c2 5-3 6-5 5 2-3 0-5-3-5-3 0-5 1-6 2z" fill="#4fd08a" />
            <path d="M2 11c0-4 4-6 7-5-3 1-3 6 3 7-3 3-9 2-10-2z" fill="#0d4f95" />
          </svg>
        }
      />
      <button className="w-[38px] flex justify-center" aria-label="Excel">
        <Office letter="X" className="text-[#217346]" />
      </button>
      <Task
        className="w-[102px]"
        label="Совмещение_поз..."
        icon={
          <svg viewBox="0 0 14 14" className="size-[14px]">
            <path d="M2 1h5l1 2h2v10H2z" fill="#f0b93a" />
            <path d="M5 3h6v10H3z" fill="#fbdc7c" />
          </svg>
        }
      />
      <Task className="w-[102px] ml-[5px]" label="КОМПАС-3D v23 ..." icon={<Glyph name="logo" className="size-[15px]" />} />
      <Task className="w-[107px] ml-[3px]" label="постановка.png" active icon={<PhotoLogo className="size-[15px] ml-1" />} />
      <div className="ml-auto flex items-center h-full gap-1 pr-[2px]">
        <ChevronUp className="size-[10px]" />
        <svg viewBox="0 0 14 12" className="w-[13px] h-[11px] ml-1" fill="none" stroke="#fff">
          <path d="M3 4h9v6H3zM13 6v2" />
          <path d="M4.500 5.500h6v3h-6zM1 1h3v3H1z" fill="#fff" />
        </svg>
        <svg viewBox="0 0 12 12" className="size-3" fill="none" stroke="#fff">
          <path d="M4 2.500h7.500v6H4M8 8.500V11M5 11h5M1 1h3v3H1zM2.500 4v7" />
        </svg>
        <Volume2 className="size-[13px]" />
        <span>ENG</span>
        <span className="text-center leading-[11px] w-[46px]">
          15:21
          <br />
          21.02.2025
        </span>
        <span className="relative w-[22px] h-5">
          <svg viewBox="0 0 12 12" className="absolute left-[3px] top-[2px] size-3" fill="#fff">
            <path d="M0 0h12v9H6L3 12V9H0z" />
            <path d="M2 3h8M2 6h8" stroke="#19222c" />
          </svg>
          <span className="absolute left-2 top-2 size-[11px] rounded-full bg-[#39424c] border border-[#aaa] text-[7px] leading-[9px] text-center">
            23
          </span>
        </span>
        <span className="w-px h-full bg-[#55606b]" />
      </div>
    </footer>
  );
}

export default function App() {
  return (
    <div className="relative h-screen flex flex-col overflow-hidden text-[8px] leading-[10px] text-[#333] font-[Roboto,'Noto_Sans',sans-serif]">
      <MenuBar />
      <TabBar />
      <Ribbon />
      <main className="flex flex-1 min-h-0">
        <SideStrip />
        <TreePanel />
        <Viewport />
      </main>
      <InsertWindow />
      <PhotoWindow />
      <Taskbar />
    </div>
  );
}
